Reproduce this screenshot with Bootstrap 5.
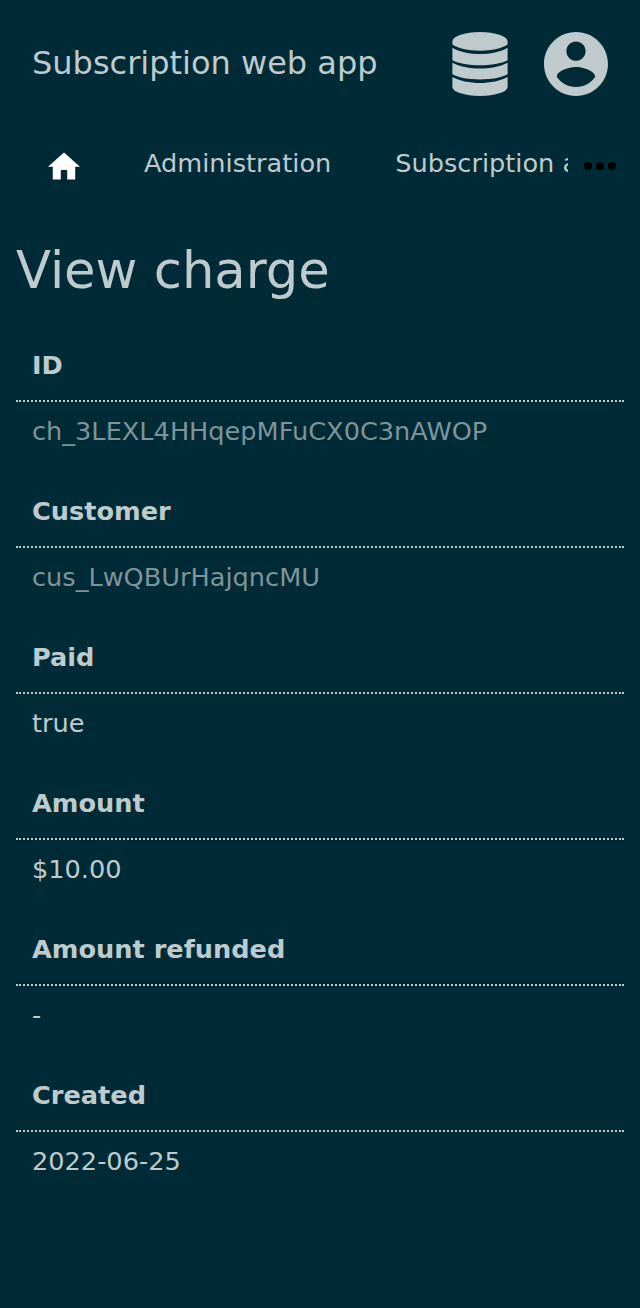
<!DOCTYPE html>
<html lang="en">
<head>
<meta charset="utf-8">
<meta name="viewport" content="width=device-width, initial-scale=1">
<title>View charge</title>
<link href="https://cdn.jsdelivr.net/npm/bootstrap@5.3.0/dist/css/bootstrap.min.css" rel="stylesheet">
<style>
body{background:#002b36;color:#bfcacd;font-family:"DejaVu Sans",sans-serif;font-size:25.6px;line-height:34px}
svg{display:block;fill:currentColor;flex:none}
.app-header{height:128px;padding:0 32px}
.app-title{font-size:32px;padding-bottom:2px}
.icon-data{margin-right:36px}
.app-menu{height:72px}
.menu-scroll{width:568px;height:38px}
.menu-scroll .nav-link{color:inherit;padding:0 32px 2px;line-height:34px}
.menu-scroll .nav-home{padding-top:4px;padding-bottom:0}
.menu-more{margin-top:4px}
.page-title{font-size:51.2px;font-weight:400;line-height:60px;margin:40px 0 32px}
.field{height:146px}
.field dt{height:70px;padding:16px 16px 0;border-bottom:2px dotted #bfcacd}
.field dd{padding:12px 16px 0;margin:0}
.faded{color:#7e949a}
</style>
</head>
<body>
<header class="app-header d-flex align-items-center">
  <div class="app-title me-auto">Subscription web app</div>
  <svg class="icon-data" width="56" height="64" viewBox="0 0 56 64"><path d="M.4 9.500A27.600 9.500 0 0 1 55.600 9.500V12.600C50 16.500 40 18.700 28 18.700S6 16.500 .4 12.600ZM.4 15.800C7 20 18 22.100 28 22.100S49 20 55.600 15.800V28.200C49 31.500 39 33.300 28 33.300S7 31.500 .4 28.200ZM.4 30.800C7 34.400 18 36.600 28 36.600S49 34.400 55.600 30.800V42.300C49 45.700 39 47.500 28 47.500S7 45.700 .4 42.300ZM.4 44.900C7 48.700 18 50.900 28 50.900S49 48.700 55.600 44.900V55A27.600 9 0 0 1 .4 55Z"/></svg>
  <svg width="64" height="64" viewBox="2 2 20 20"><path d="M12 2C6.480 2 2 6.480 2 12s4.480 10 10 10 10-4.480 10-10S17.520 2 12 2zm0 3c1.660 0 3 1.340 3 3s-1.340 3-3 3-3-1.340-3-3 1.340-3 3-3zm0 14.200c-2.500 0-4.710-1.280-6-3.220.030-1.990 4-3.080 6-3.080 1.990 0 5.970 1.090 6 3.080-1.290 1.940-3.500 3.220-6 3.220z"/></svg>
</header>
<div class="app-menu d-flex align-items-center">
  <nav class="menu-scroll nav flex-nowrap text-nowrap overflow-hidden align-items-center">
    <a class="nav-link nav-home text-white ps-5" href="#"><svg width="32" height="28" viewBox="2 2.750 20 17.500"><path d="M10 20v-6h4v6h5v-8h3L12 3 2 12h3v8z"/></svg></a>
    <a class="nav-link" href="#">Administration</a>
    <a class="nav-link" href="#">Subscription administration</a>
  </nav>
  <svg class="menu-more ms-3 text-black" width="32" height="8" viewBox="0 0 32 8"><circle cx="4" cy="4" r="4"/><circle cx="16" cy="4" r="4"/><circle cx="28" cy="4" r="4"/></svg>
</div>
<main class="px-3">
  <h1 class="page-title">View charge</h1>
  <dl class="m-0">
    <div class="field"><dt>ID</dt><dd class="faded">ch_3LEXL4HHqepMFuCX0C3nAWOP</dd></div>
    <div class="field"><dt>Customer</dt><dd class="faded">cus_LwQBUrHajqncMU</dd></div>
    <div class="field"><dt>Paid</dt><dd>true</dd></div>
    <div class="field"><dt>Amount</dt><dd>$10.00</dd></div>
    <div class="field"><dt>Amount refunded</dt><dd>-</dd></div>
    <div class="field"><dt>Created</dt><dd>2022-06-25</dd></div>
  </dl>
</main>
<script src="https://cdn.jsdelivr.net/npm/bootstrap@5.3.0/dist/js/bootstrap.bundle.min.js"></script>
</body>
</html>
